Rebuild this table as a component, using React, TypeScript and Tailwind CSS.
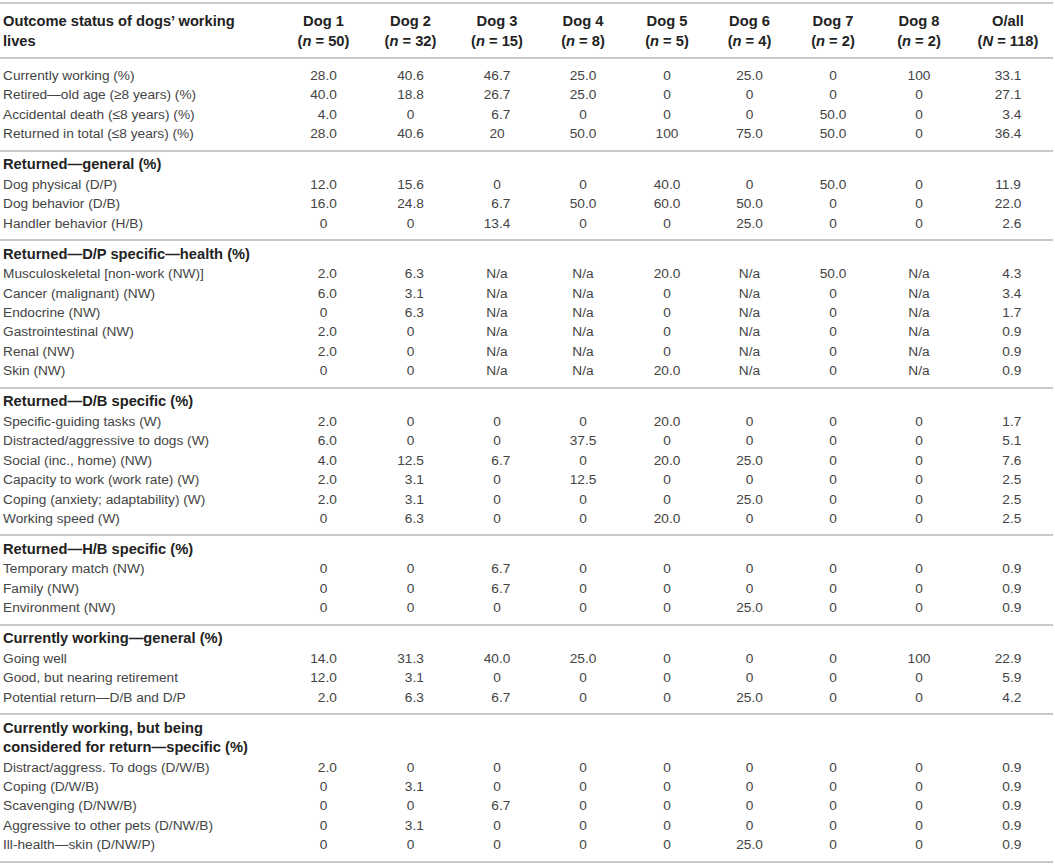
import React from 'react';

type Row = [string, ...string[]];

type Section = {
  title?: string[];
  rows: Row[];
};

const cols = 'grid grid-cols-[280px_87px_87px_86px_86px_82px_83px_84px_88px_90px]';

const sections: Section[] = [
  {
    rows: [
      ['Currently working (%)', '28.0', '40.6', '46.7', '25.0', '0', '25.0', '0', '100', '33.1'],
      ['Retired—old age (≥8 years) (%)', '40.0', '18.8', '26.7', '25.0', '0', '0', '0', '0', '27.1'],
      ['Accidental death (≤8 years) (%)', '4.0', '0', '6.7', '0', '0', '0', '50.0', '0', '3.4'],
      ['Returned in total (≤8 years) (%)', '28.0', '40.6', '20', '50.0', '100', '75.0', '50.0', '0', '36.4'],
    ],
  },
  {
    title: ['Returned—general (%)'],
    rows: [
      ['Dog physical (D/P)', '12.0', '15.6', '0', '0', '40.0', '0', '50.0', '0', '11.9'],
      ['Dog behavior (D/B)', '16.0', '24.8', '6.7', '50.0', '60.0', '50.0', '0', '0', '22.0'],
      ['Handler behavior (H/B)', '0', '0', '13.4', '0', '0', '25.0', '0', '0', '2.6'],
    ],
  },
  {
    title: ['Returned—D/P specific—health (%)'],
    rows: [
      ['Musculoskeletal [non-work (NW)]', '2.0', '6.3', 'N/a', 'N/a', '20.0', 'N/a', '50.0', 'N/a', '4.3'],
      ['Cancer (malignant) (NW)', '6.0', '3.1', 'N/a', 'N/a', '0', 'N/a', '0', 'N/a', '3.4'],
      ['Endocrine (NW)', '0', '6.3', 'N/a', 'N/a', '0', 'N/a', '0', 'N/a', '1.7'],
      ['Gastrointestinal (NW)', '2.0', '0', 'N/a', 'N/a', '0', 'N/a', '0', 'N/a', '0.9'],
      ['Renal (NW)', '2.0', '0', 'N/a', 'N/a', '0', 'N/a', '0', 'N/a', '0.9'],
      ['Skin (NW)', '0', '0', 'N/a', 'N/a', '20.0', 'N/a', '0', 'N/a', '0.9'],
    ],
  },
  {
    title: ['Returned—D/B specific (%)'],
    rows: [
      ['Specific-guiding tasks (W)', '2.0', '0', '0', '0', '20.0', '0', '0', '0', '1.7'],
      ['Distracted/aggressive to dogs (W)', '6.0', '0', '0', '37.5', '0', '0', '0', '0', '5.1'],
      ['Social (inc., home) (NW)', '4.0', '12.5', '6.7', '0', '20.0', '25.0', '0', '0', '7.6'],
      ['Capacity to work (work rate) (W)', '2.0', '3.1', '0', '12.5', '0', '0', '0', '0', '2.5'],
      ['Coping (anxiety; adaptability) (W)', '2.0', '3.1', '0', '0', '0', '25.0', '0', '0', '2.5'],
      ['Working speed (W)', '0', '6.3', '0', '0', '20.0', '0', '0', '0', '2.5'],
    ],
  },
  {
    title: ['Returned—H/B specific (%)'],
    rows: [
      ['Temporary match (NW)', '0', '0', '6.7', '0', '0', '0', '0', '0', '0.9'],
      ['Family (NW)', '0', '0', '6.7', '0', '0', '0', '0', '0', '0.9'],
      ['Environment (NW)', '0', '0', '0', '0', '0', '25.0', '0', '0', '0.9'],
    ],
  },
  {
    title: ['Currently working—general (%)'],
    rows: [
      ['Going well', '14.0', '31.3', '40.0', '25.0', '0', '0', '0', '100', '22.9'],
      ['Good, but nearing retirement', '12.0', '3.1', '0', '0', '0', '0', '0', '0', '5.9'],
      ['Potential return—D/B and D/P', '2.0', '6.3', '6.7', '0', '0', '25.0', '0', '0', '4.2'],
    ],
  },
  {
    title: ['Currently working, but being', 'considered for return—specific (%)'],
    rows: [
      ['Distract/aggress. To dogs (D/W/B)', '2.0', '0', '0', '0', '0', '0', '0', '0', '0.9'],
      ['Coping (D/W/B)', '0', '3.1', '0', '0', '0', '0', '0', '0', '0.9'],
      ['Scavenging (D/NW/B)', '0', '0', '6.7', '0', '0', '0', '0', '0', '0.9'],
      ['Aggressive to other pets (D/NW/B)', '0', '3.1', '0', '0', '0', '0', '0', '0', '0.9'],
      ['Ill-health—skin (D/NW/P)', '0', '0', '0', '0', '0', '25.0', '0', '0', '0.9'],
    ],
  },
];

const heads: [string, string, string][] = [
  ['Dog 1', 'n', '50'],
  ['Dog 2', 'n', '32'],
  ['Dog 3', 'n', '15'],
  ['Dog 4', 'n', '8'],
  ['Dog 5', 'n', '5'],
  ['Dog 6', 'n', '4'],
  ['Dog 7', 'n', '2'],
  ['Dog 8', 'n', '2'],
  ['O/all', 'N', '118'],
];

// pad single-digit decimals with a figure space so they line up on the point
const fmt = (v: string) => (/^\d\.\d$/.test(v) ? '\u2007' + v : v);

const App: React.FC = () => {
  return (
    <div className="w-[1053px] pt-[2px] bg-white font-['Liberation_Sans',Arial,sans-serif] text-[13.7px]">
      {/* header */}
      <div className={`${cols} border-t-2 border-[#c9c9c9] pt-[7px] pb-[6px] leading-[20px] text-[14.7px] font-bold text-[#222]`}>
        <div className="pl-[3px] whitespace-nowrap">
          Outcome status of dogs’ working
          <br />
          lives
        </div>
        {heads.map(([name, sym, num]) => (
          <div key={name} className="text-center whitespace-nowrap">
            {name}
            <br />
            (<i>{sym}</i> = {num})
          </div>
        ))}
      </div>

      {sections.map((s, i) => (
        <div
          key={i}
          className={`border-t-2 border-[#c9c9c9] pb-[6px] leading-[19.45px] ${
            i === 0 ? 'pt-[7px]' : 'pt-[3.5px]'
          } ${i === sections.length - 1 ? 'border-b-2' : ''}`}
        >
          {s.title?.map((t) => (
            <div key={t} className="pl-[3px] text-[14.7px] font-bold text-[#222] whitespace-nowrap">
              {t}
            </div>
          ))}
          {s.rows.map(([label, ...vals]) => (
            <div key={label} className={`${cols} text-[#444]`}>
              <div className="pl-[3px] whitespace-nowrap">{label}</div>
              {vals.map((v, j) => (
                <div key={j} className="text-center whitespace-pre">
                  {fmt(v)}
                </div>
              ))}
            </div>
          ))}
        </div>
      ))}
    </div>
  );
};

export default App;
